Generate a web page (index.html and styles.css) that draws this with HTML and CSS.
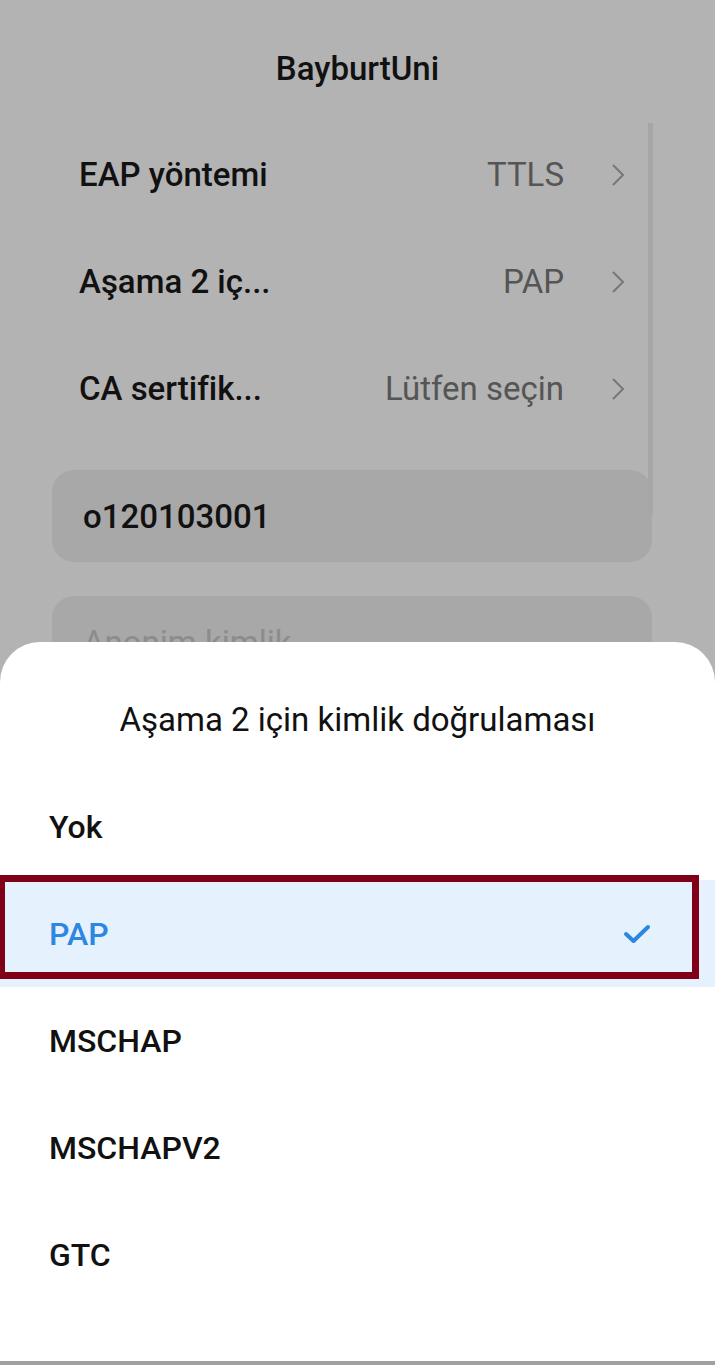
FILE: index.html
```html
<!DOCTYPE html>
<html lang="tr">
<head>
  <meta charset="UTF-8" />
  <meta name="viewport" content="width=device-width, initial-scale=1" />
  <title>BayburtUni</title>
  <link rel="stylesheet" href="styles.css">
</head>
<body>

  <div class="screen">
    <div class="header">BayburtUni</div>

    <div class="settings">
      <div class="row">
        <span class="label">EAP yöntemi</span>
        <span class="value">TTLS</span>
        <svg class="chevron" viewBox="0 0 14 24"><path d="M2 2 L12 12 L2 22" /></svg>
      </div>
      <div class="row">
        <span class="label">Aşama 2 iç...</span>
        <span class="value">PAP</span>
        <svg class="chevron" viewBox="0 0 14 24"><path d="M2 2 L12 12 L2 22" /></svg>
      </div>
      <div class="row">
        <span class="label">CA sertifik...</span>
        <span class="value">Lütfen seçin</span>
        <svg class="chevron" viewBox="0 0 14 24"><path d="M2 2 L12 12 L2 22" /></svg>
      </div>

      <div class="field">o120103001</div>
      <div class="field placeholder">Anonim kimlik</div>
    </div>

    <div class="scrollbar"></div>

    <div class="sheet">
      <div class="sheet-title">Aşama 2 için kimlik doğrulaması</div>
      <div class="options">
        <div class="option">Yok</div>
        <div class="option selected">
          <span>PAP</span>
          <svg class="check" viewBox="0 0 28 20"><path d="M3 10 L10.5 17 L25 3" /></svg>
          <div class="mark"></div>
        </div>
        <div class="option">MSCHAP</div>
        <div class="option">MSCHAPV2</div>
        <div class="option">GTC</div>
      </div>
      <div class="nav-line"></div>
    </div>
  </div>

</body>
</html>
```

FILE: styles.css
```css
* {
  box-sizing: border-box;
  font-family: Roboto, 'Noto Sans', sans-serif;
}

body {
  margin: 0;
  padding: 0;
  background: #b3b3b3;
}

.screen {
  position: relative;
  width: 715px;
  height: 1365px;
  overflow: hidden;
  background: #b3b3b3;
}

.header {
  height: 121px;
  padding-top: 49px;
  text-align: center;
  font-size: 33px;
  font-weight: 500;
  line-height: 40px;
  color: #111;
}

.settings {
  padding: 0 63px 0 52px;
}

.row {
  display: flex;
  align-items: center;
  height: 107px;
  padding-left: 27px;
}

.label {
  flex: 1;
  font-size: 33px;
  font-weight: 500;
  color: #111;
}

.value {
  font-size: 33px;
  color: #555;
}

.chevron {
  width: 14px;
  height: 24px;
  margin-left: 47px;
  margin-right: 27px;
  fill: none;
  stroke: #777;
  stroke-width: 2;
}

.field {
  height: 92px;
  margin-top: 28px;
  padding-left: 31px;
  border-radius: 22px;
  background: #a8a8a8;
  display: flex;
  align-items: center;
  font-size: 33px;
  font-weight: 500;
  color: #111;
}

.field.placeholder {
  margin-top: 34px;
  color: #8c8c8c;
  font-weight: 400;
}

.scrollbar {
  position: absolute;
  left: 648px;
  top: 123px;
  width: 5px;
  height: 392px;
  background: #a6a6a6;
}

.sheet {
  position: absolute;
  left: 0;
  right: 0;
  top: 642px;
  bottom: 0;
  background: #fff;
  border-radius: 40px 40px 0 0;
}

.sheet-title {
  padding-top: 58px;
  height: 131px;
  text-align: center;
  font-size: 33px;
  line-height: 40px;
  color: #111;
}

.option {
  position: relative;
  display: flex;
  align-items: center;
  justify-content: space-between;
  height: 107px;
  padding: 0 64px 0 49px;
  font-size: 32px;
  font-weight: 500;
  color: #111;
}

.option.selected {
  background: #e5f1fd;
  color: #2c87e0;
}

.check {
  width: 28px;
  height: 20px;
  fill: none;
  stroke: #2c87e0;
  stroke-width: 4;
  stroke-linecap: round;
  stroke-linejoin: round;
}

.mark {
  position: absolute;
  left: -2px;
  right: 16px;
  top: -5px;
  bottom: 8px;
  border: 7px solid #800018;
}

.nav-line {
  position: absolute;
  left: 0;
  right: 0;
  bottom: 0;
  height: 4px;
  background: #a0a0a0;
}
```
